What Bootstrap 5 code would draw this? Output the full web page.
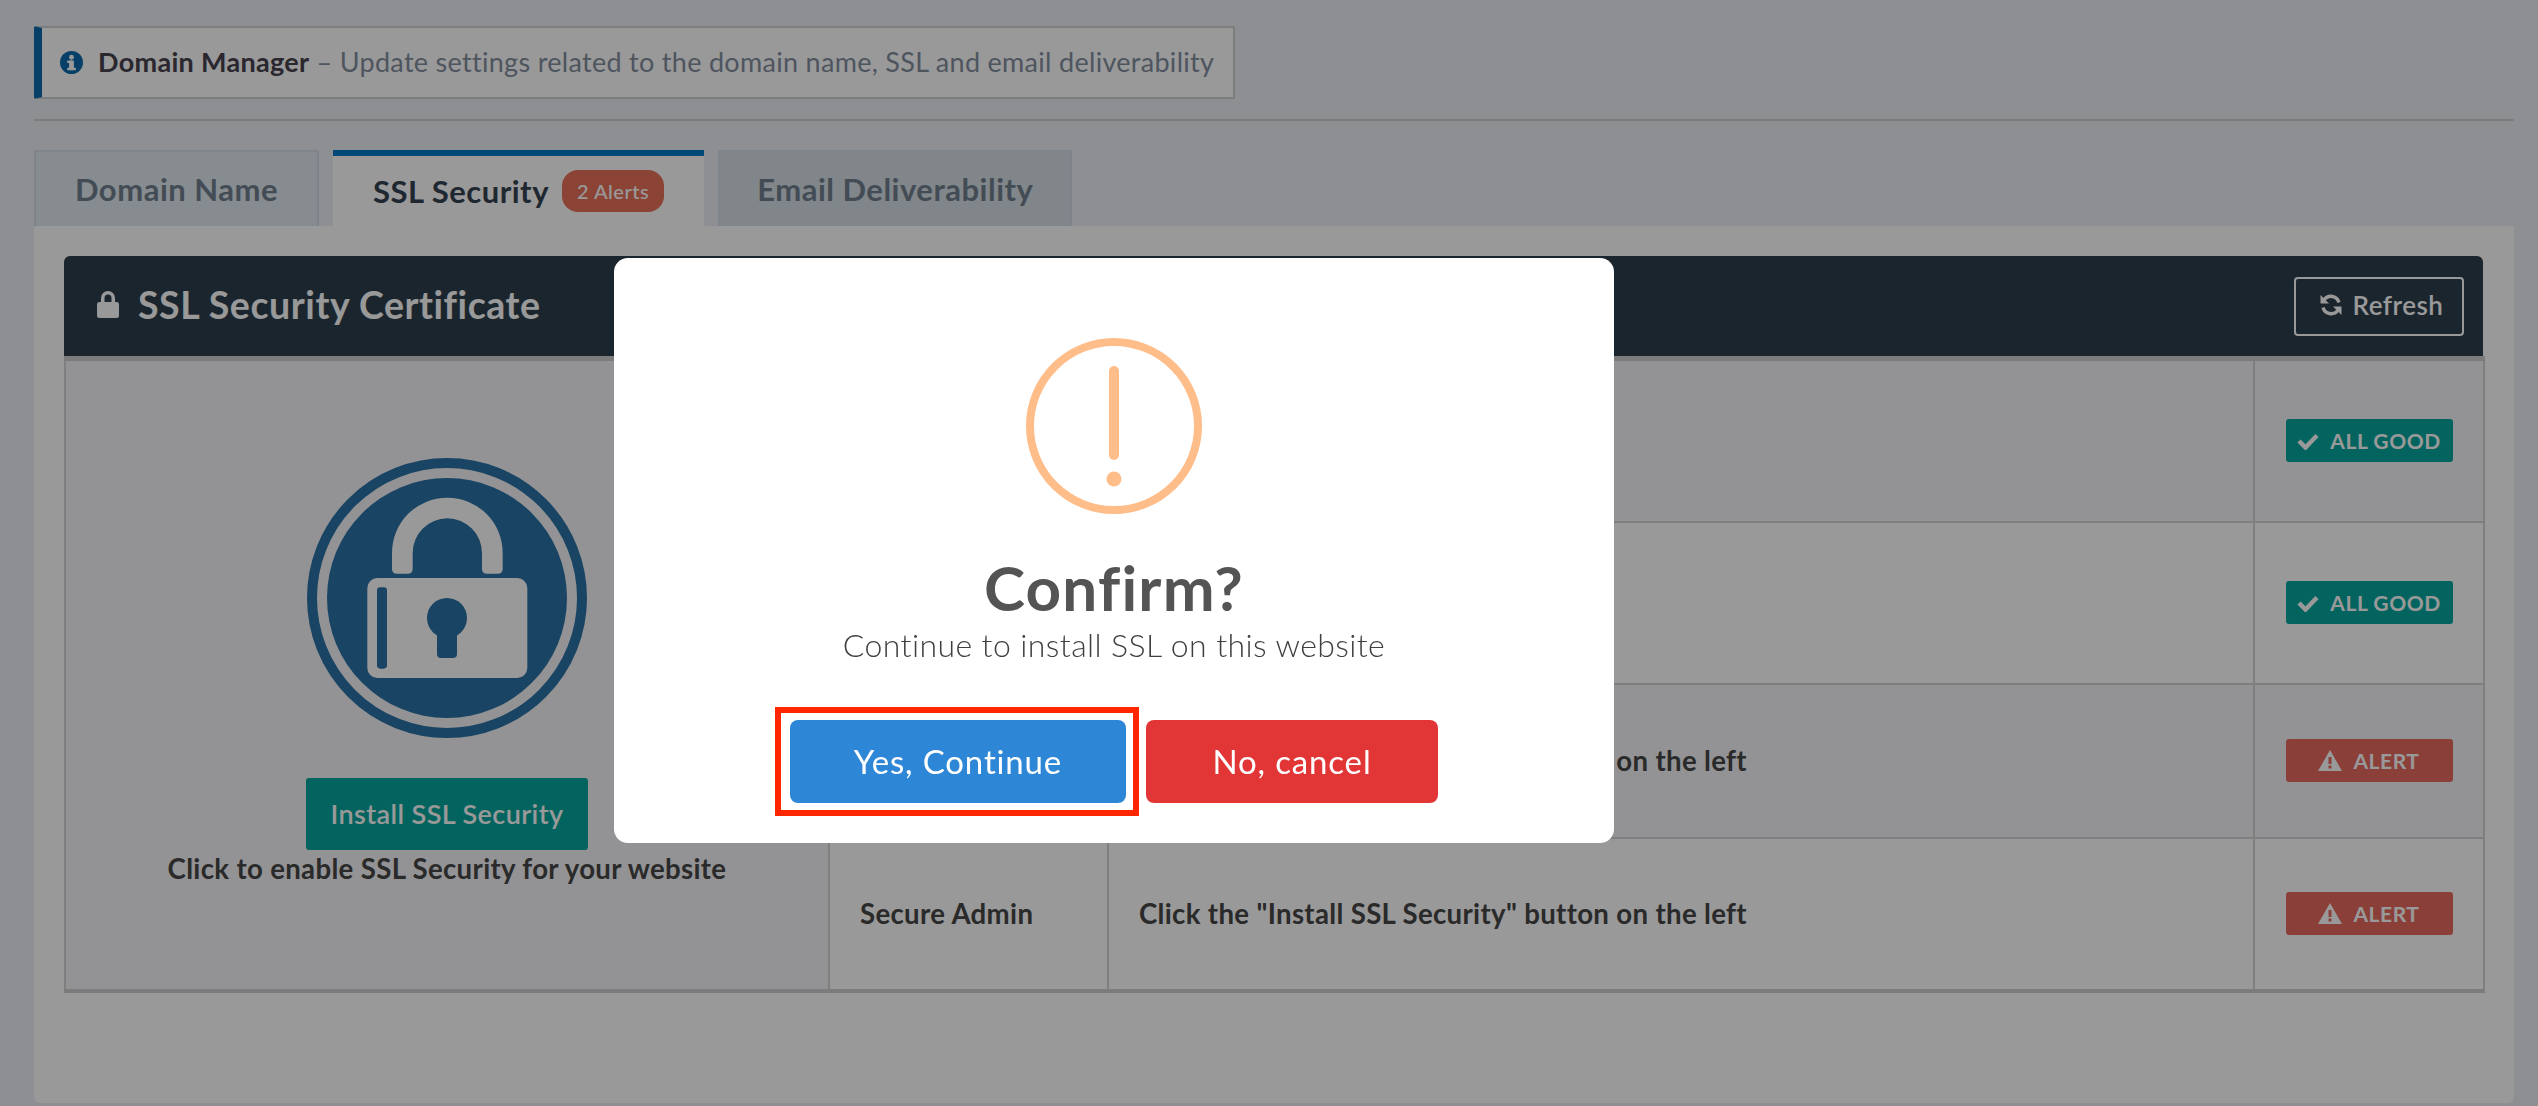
<!DOCTYPE html>
<html lang="en">
<head>
    <meta charset="UTF-8">
    <title>Domain Manager</title>
    <link rel="stylesheet" href="https://cdn.jsdelivr.net/npm/bootstrap@5.3.0/dist/css/bootstrap.min.css">
    <style>
        body {
            background-color: #edeff5;
            font-family: "Lato", "Liberation Sans", sans-serif;
            color: #464646;
            height: 1106px;
            overflow: hidden;
            padding: 26px 24px 0 34px;
        }
        .page-note {
            display: inline-flex;
            align-items: center;
            height: 73px;
            width: 1201px;
            padding-left: 18px;
            gap: 15px;
            margin: 0;
            background: #fff;
            border: 2px solid #d0d0d0;
            border-left: 8px solid #0a6cb0;
            border-radius: 2px;
            font-size: 27px;
            letter-spacing: .3px;
            color: #828e9e;
            white-space: nowrap;
        }
        .page-note svg { flex-shrink: 0; }
        .page-note strong { color: #46424f; font-weight: 700; }
        .page-rule { margin: 20px 0 29px; border-top: 2px solid #cfcfcf; opacity: 1; }
        .tab-row { border: 0; gap: 14px; height: 76px; }
        .tab-row .nav-link {
            height: 76px;
            display: flex;
            align-items: center;
            padding: 0 39px;
            background: #dfe9ee;
            border: 2px solid #d2dde4;
            border-bottom: 0;
            border-radius: 0;
            font-size: 31px;
            font-weight: 700;
            letter-spacing: .5px;
            color: #717f8e;
            margin: 0;
        }
        .tab-row .tab-third { background: #d6e0e6; padding: 0 37px; }
        .tab-row .nav-link.active {
            background: #fff;
            color: #344150;
            border: 0;
            border-top: 6px solid #0079c8;
            padding: 0 40px;
            gap: 13px;
        }
        .tab-count {
            background: #e8705a;
            color: #fff;
            font-size: 20px;
            font-weight: 500;
            border-radius: 16px;
            padding: 6px 15px;
        }
        .tab-panel {
            background: #fff;
            height: 877px;
            padding: 30px 31px 0 30px;
            border-radius: 0 0 6px 6px;
        }
        .ssl-head {
            height: 100px;
            background: #2d3f4e;
            color: #fff;
            padding: 0 19px 0 32px;
            border-radius: 6px 6px 0 0;
        }
        .ssl-head h2 { font-size: 37.500px; font-weight: 700; margin: 0 0 4px; letter-spacing: .55px; gap: 18px; }
        .refresh-btn {
            width: 170px;
            height: 59px;
            border: 2px solid #fff;
            border-radius: 4px;
            color: #fff;
            font-size: 26px;
            font-weight: 600;
            letter-spacing: .5px;
            padding: 0 0 2px 4px;
            gap: 10px;
        }
        .ssl-table { table-layout: fixed; margin: 0; border-color: #d4d4d4; border-top: 5px solid #cfcfcf; border-bottom: 4px solid #cfcfcf; }
        .ssl-table td {
            vertical-align: middle;
            padding: 0 30px;
            border-width: 2px;
            border-color: #d4d4d4;
            font-size: 27.600px;
            font-weight: 700;
            letter-spacing: .33px;
            color: #464646;
            background: #fff;
        }
        .ssl-table .row-shade td { background: #f5f6f8; }
        .ssl-table .left-cell { background: #fff; text-align: center; padding: 0 0 2px; }
        .row-a { height: 163px; }
        .row-b { height: 162px; }
        .row-c { height: 154px; }
        .row-d { height: 153px; }
        .ssl-logo { display: block; margin: 0 auto 40px; }
        .install-btn {
            width: 282px;
            height: 72px;
            background: #06a79e;
            border: 0;
            border-radius: 3px;
            color: #fff;
            font-size: 27px;
            font-weight: 600;
            letter-spacing: .4px;
            padding: 0;
            display: block;
            margin: 0 auto -2px;
        }
        .status-tag {
            display: flex;
            align-items: center;
            justify-content: center;
            gap: 11px;
            width: 167px;
            height: 43px;
            margin: 0 auto;
            border-radius: 3px;
            color: #fff;
            font-size: 21px;
            font-weight: 700;
            letter-spacing: .55px;
            padding: 0;
        }
        .status-good { background: #06a79e; }
        .status-alert { background: #e66b5e; }
        .modal-backdrop.show { opacity: .4; }
        .confirm-dialog { max-width: none; width: 1000px; margin: 258px 0 0 614px; }
        .confirm-box {
            height: 585px;
            border: 0;
            border-radius: 14px;
            padding-top: 80px;
            color: #545454;
            font-family: "Lato", "Liberation Sans", sans-serif;
            text-align: center;
        }
        .confirm-icon { display: block; margin: 0 auto; }
        .confirm-box h3 { font-size: 62px; font-weight: 700; line-height: 1; margin: 42px 0 0; letter-spacing: 1.200px; }
        .confirm-box p { font-size: 32px; font-weight: 300; line-height: 1; margin: 11px 0 0; letter-spacing: .4px; color: #3f3f3f; }
        .confirm-actions { gap: 20px; margin-top: 59px; }
        .confirm-actions .btn {
            height: 83px;
            border: 0;
            border-radius: 8px;
            color: #fff;
            font-size: 33px;
            letter-spacing: .85px;
            padding: 0;
        }
        .btn-yes { width: 336px; background: #2d87d6; }
        .btn-no { width: 292px; background: #e23636; }
        .mark-box {
            position: absolute;
            left: 161px;
            top: 449px;
            width: 364px;
            height: 109px;
            border: 6px solid #ff2600;
            pointer-events: none;
        }
    </style>
</head>
<body>
    <div class="page-note">
        <svg width="23" height="23" viewBox="0 0 24 24"><circle cx="12" cy="12" r="12" fill="#0a6cb0"/><rect x="9.500" y="10" width="5" height="10" fill="#fff"/><rect x="7.500" y="10" width="5" height="2.500" fill="#fff"/><rect x="7.500" y="17.500" width="9" height="2.500" fill="#fff"/><circle cx="12" cy="6.500" r="2.500" fill="#fff"/></svg>
        <span><strong>Domain Manager</strong> – Update settings related to the domain name, SSL and email deliverability</span>
    </div>
    <hr class="page-rule">

    <ul class="nav nav-tabs tab-row">
        <li class="nav-item"><a class="nav-link" href="#">Domain Name</a></li>
        <li class="nav-item"><a class="nav-link active" href="#">SSL Security <span class="tab-count">2 Alerts</span></a></li>
        <li class="nav-item"><a class="nav-link tab-third" href="#">Email Deliverability</a></li>
    </ul>

    <div class="tab-panel">
        <div class="ssl-head d-flex align-items-center justify-content-between">
            <h2 class="d-flex align-items-center">
                <svg width="24" height="28" viewBox="0 0 24 28"><path d="M5 12V8a7 7 0 0 1 14 0v4h-3.500V8a3.500 3.500 0 0 0-7 0v4z" fill="#fff"/><rect x="1" y="12" width="22" height="16" rx="2.500" fill="#fff"/></svg>
                SSL Security Certificate
            </h2>
            <button class="btn refresh-btn d-flex align-items-center justify-content-center">
                <svg width="24" height="24" viewBox="0 0 24 24"><path d="M20 9.500A8.500 8.500 0 0 0 5.200 6.500" fill="none" stroke="#fff" stroke-width="3.400"/><path d="M1.500 2v8.500H10z" fill="#fff"/><path d="M4 14.500a8.500 8.500 0 0 0 14.800 3" fill="none" stroke="#fff" stroke-width="3.400"/><path d="M22.500 22v-8.500H14z" fill="#fff"/></svg>
                Refresh
            </button>
        </div>
        <table class="table table-bordered ssl-table">
            <colgroup>
                <col style="width: 764px">
                <col style="width: 279px">
                <col style="width: 1146px">
                <col style="width: 230px">
            </colgroup>
            <tbody>
                <tr class="row-a row-shade">
                    <td class="left-cell" rowspan="4">
                        <svg class="ssl-logo" width="280" height="280" viewBox="0 0 840 840">
                            <circle cx="420" cy="420" r="405" fill="none" stroke="#2c72a5" stroke-width="30"/>
                            <circle cx="420" cy="420" r="360" fill="#2c72a5"/>
                            <path d="M255 285a166 166 0 0 1 332 0v47q0 15-15 15h-32q-15 0-15-15v-47a104 104 0 0 0-208 0v47q0 15-15 15h-32q-15 0-15-15z" fill="#fff"/>
                            <rect x="181" y="360" width="480" height="300" rx="30" fill="#fff"/>
                            <rect x="210" y="388" width="30" height="244" rx="10" fill="#2c72a5"/>
                            <circle cx="420" cy="480" r="60" fill="#2c72a5"/>
                            <rect x="390" y="500" width="60" height="100" rx="12" fill="#2c72a5"/>
                        </svg>
                        <button class="btn install-btn">Install SSL Security</button>
                        Click to enable SSL Security for your website
                    </td>
                    <td></td>
                    <td></td>
                    <td><span class="badge status-tag status-good">
                        <svg width="22" height="18" viewBox="0 0 22 18"><path d="M2 9l6.500 6.500L20 3.500" fill="none" stroke="#fff" stroke-width="4.500"/></svg>
                        ALL GOOD</span></td>
                </tr>
                <tr class="row-b">
                    <td></td>
                    <td></td>
                    <td><span class="badge status-tag status-good">
                        <svg width="22" height="18" viewBox="0 0 22 18"><path d="M2 9l6.500 6.500L20 3.500" fill="none" stroke="#fff" stroke-width="4.500"/></svg>
                        ALL GOOD</span></td>
                </tr>
                <tr class="row-c row-shade">
                    <td></td>
                    <td>Click the "Install SSL Security" button on the left</td>
                    <td><span class="badge status-tag status-alert">
                        <svg width="24" height="21" viewBox="0 0 24 21"><path d="M12 0l12 21H0z" fill="#fff"/><rect x="10.500" y="7" width="3" height="7" fill="#e66b5e"/><rect x="10.500" y="15.500" width="3" height="3" fill="#e66b5e"/></svg>
                        ALERT</span></td>
                </tr>
                <tr class="row-d">
                    <td>Secure Admin</td>
                    <td>Click the "Install SSL Security" button on the left</td>
                    <td><span class="badge status-tag status-alert">
                        <svg width="24" height="21" viewBox="0 0 24 21"><path d="M12 0l12 21H0z" fill="#fff"/><rect x="10.500" y="7" width="3" height="7" fill="#e66b5e"/><rect x="10.500" y="15.500" width="3" height="3" fill="#e66b5e"/></svg>
                        ALERT</span></td>
                </tr>
            </tbody>
        </table>
    </div>

    <div class="modal-backdrop fade show"></div>
    <div class="modal fade show d-block" tabindex="-1">
        <div class="modal-dialog confirm-dialog">
            <div class="modal-content confirm-box">
                <svg class="confirm-icon" width="176" height="176" viewBox="0 0 176 176">
                    <circle cx="88" cy="88" r="84" fill="none" stroke="#ffbd8a" stroke-width="8"/>
                    <rect x="83" y="28" width="10" height="94" rx="5" fill="#ffbd8a"/>
                    <circle cx="88" cy="141" r="7.500" fill="#ffbd8a"/>
                </svg>
                <h3>Confirm?</h3>
                <p>Continue to install SSL on this website</p>
                <div class="confirm-actions d-flex justify-content-center">
                    <button class="btn btn-yes">Yes, Continue</button>
                    <button class="btn btn-no">No, cancel</button>
                </div>
                <div class="mark-box"></div>
            </div>
        </div>
    </div>

    <script src="https://cdn.jsdelivr.net/npm/bootstrap@5.3.0/dist/js/bootstrap.bundle.min.js"></script>
</body>
</html>
